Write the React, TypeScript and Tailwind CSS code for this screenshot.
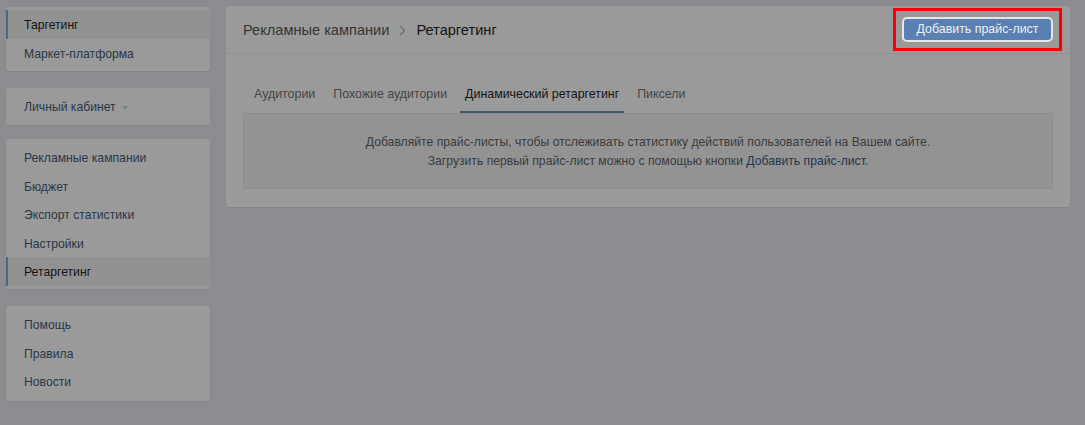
import React from "react";

const font = { fontFamily: '"Liberation Sans", Arial, sans-serif' };

interface NavItem {
	label: string;
	active?: boolean;
}

const NavCard: React.FC<{ items: NavItem[]; className?: string }> = ({ items, className }) => (
	<div className={"bg-[#9a9a9a] rounded-[3px] shadow-[0_1px_0_#868686] " + (className ?? "")}>
		{items.map((item) => (
			<div
				key={item.label}
				className={
					item.active
						? "h-[28.5px] flex items-center pt-[2px] pl-[16px] border-l-2 border-[#4c6684] bg-[#929292] text-[12.2px] text-[#141414]"
						: "h-[28.5px] flex items-center pt-[2px] pl-[18px] text-[12.2px] text-[#2b3748]"
				}
			>
				{item.label}
			</div>
		))}
	</div>
);

const tabs = ["Аудитории", "Похожие аудитории", "Динамический ретаргетинг", "Пиксели"];

const App: React.FC = () => {
	return (
		<div className="w-[1085px] h-[425px] bg-[#8b8c90] flex gap-[16px] pl-[6px] pt-[7px] overflow-hidden" style={font}>
			<div className="w-[204px] flex flex-col">
				<NavCard className="pt-[3px] pb-[4px]" items={[{ label: "Таргетинг", active: true }, { label: "Маркет-платформа" }]} />
				<div className="mt-[17px] bg-[#9a9a9a] rounded-[3px] shadow-[0_1px_0_#868686] h-[37px] flex items-center pt-[1px] pl-[18px] text-[12.2px] text-[#2b3748]">
					Личный кабинет
					<span className="ml-[6px] mt-[1px] w-0 h-0 border-l-[3.5px] border-r-[3.5px] border-t-[4px] border-l-transparent border-r-transparent border-t-[#7c7f85]" />
				</div>
				<NavCard
					className="mt-[14px] pt-[4px] pb-[3.5px]"
					items={[
						{ label: "Рекламные кампании" },
						{ label: "Бюджет" },
						{ label: "Экспорт статистики" },
						{ label: "Настройки" },
						{ label: "Ретаргетинг", active: true },
					]}
				/>
				<NavCard className="mt-[17px] pt-[4px] pb-[5.5px]" items={[{ label: "Помощь" }, { label: "Правила" }, { label: "Новости" }]} />
			</div>

			<div className="w-[844px] h-[201px] -mt-[1px] bg-[#9a9a9a] rounded-[3px] shadow-[0_1px_0_#868686]">
				<div className="h-[48px] flex items-center justify-between pl-[17px] pr-[8px] border-b border-[#929292]">
					<div className="flex items-center pt-[3px] text-[14.6px]">
						<span className="text-[#353535]">Рекламные кампании</span>
						<svg className="mx-[10px]" width="7" height="11" viewBox="0 0 7 11">
							<path d="M1 1l4.5 4.5L1 10" fill="none" stroke="#6e6e6e" strokeWidth="1.3" />
						</svg>
						<span className="text-[#141414]">Ретаргетинг</span>
					</div>
					<div className="border-[3px] border-[#ff0000] p-[6px]">
						<div className="h-[25px] w-[151px] flex items-center justify-center rounded-[5px] border-2 border-[#e4e6ea] bg-[#5a80b3] text-[12.4px] text-[#eef0f3]">
							Добавить прайс-лист
						</div>
					</div>
				</div>

				<div className="px-[17px] pt-[30px]">
					<div className="flex gap-[8px] pl-[6px] h-[29px]">
						{tabs.map((t, i) => (
							<div
								key={t}
								className={
									i === 2
										? "px-[5px] pt-[3px] text-[12.4px] leading-[14px] text-[#141414] border-b-2 border-[#44597a]"
										: "px-[5px] pt-[3px] text-[12.4px] leading-[14px] text-[#444] border-b-2 border-transparent"
								}
							>
								{t}
							</div>
						))}
					</div>
					<div className="h-[76px] border border-[#8d8d8d] bg-[#939393] flex flex-col items-center justify-center pt-[2px] text-[12.2px] leading-[19px] text-[#3b3b3b]">
						<div>Добавляйте прайс-листы, чтобы отслеживать статистику действий пользователей на Вашем сайте.</div>
						<div>
							Загрузить первый прайс-лист можно с помощью кнопки{" "}
							<span className="text-[#1f3653]">Добавить прайс-лист</span>.
						</div>
					</div>
				</div>
			</div>
		</div>
	);
};

export default App;
